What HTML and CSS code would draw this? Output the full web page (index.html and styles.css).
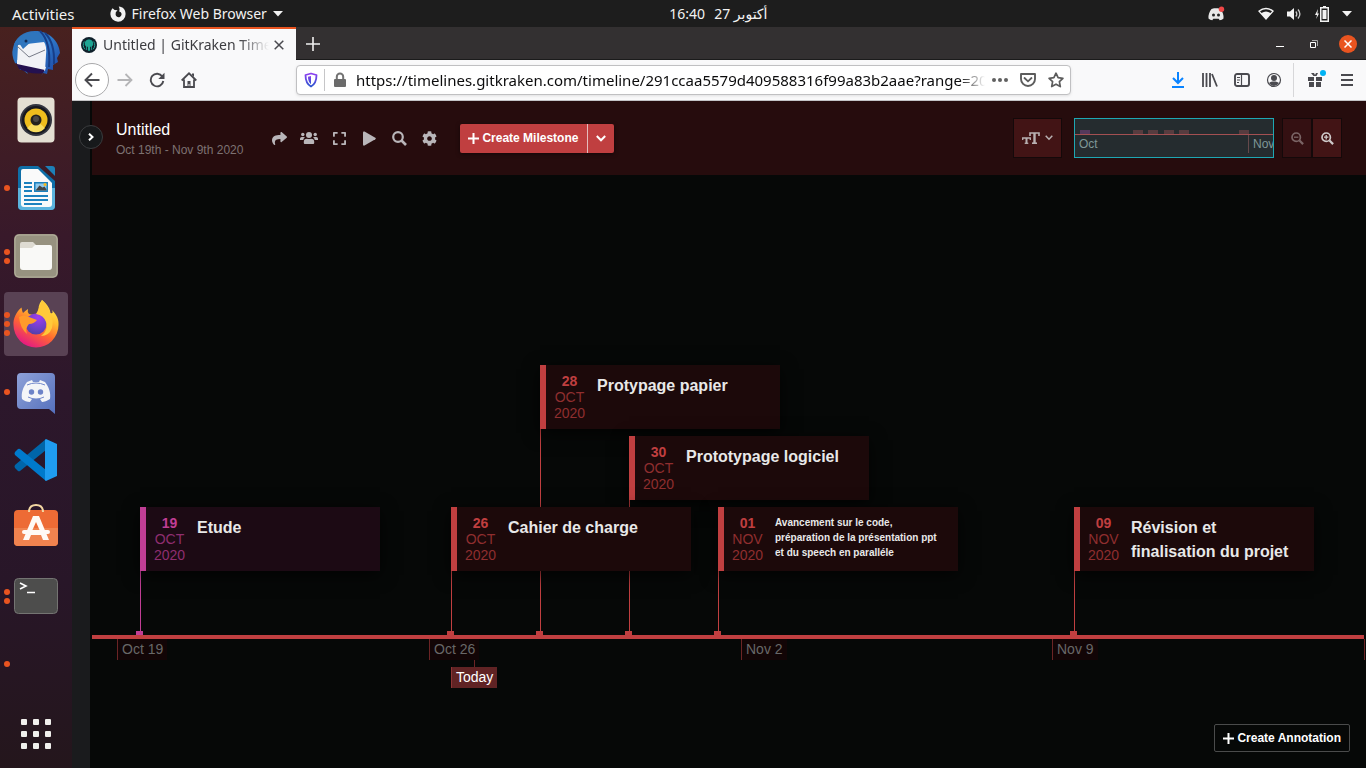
FILE: index.html
```html
<!DOCTYPE html>
<html lang="en">
<head>
<meta charset="utf-8">
<meta name="viewport" content="width=device-width, initial-scale=1">
<title>Untitled | GitKraken Timelines</title>
<link rel="stylesheet" href="styles.css">
</head>
<body>
<header class="topbar">
  <div class="topbar-left">
    <button class="bar-button activities" type="button">Activities</button>
    <button class="bar-button app-menu" type="button">
      <svg width="16" height="16" viewBox="0 0 16 16"><path fill="#f2f2f2" d="M2.600 2.200 4.600 4 7.600 4.200 5.800 6.200 5.600 8.400A3 3 0 1 0 10.800 6.200L9.200 5.600 9.600 3 8.800.6C13 .8 15.600 4 15.600 8A7.600 7.600 0 0 1 .4 8.200C.4 5.800 1.200 4 2.600 2.200Z"/></svg>
      <span>Firefox Web Browser</span>
      <svg width="10" height="6" viewBox="0 0 10 6"><path fill="#f2f2f2" d="M0 0h10L5 5.500Z"/></svg>
    </button>
  </div>
  <button class="bar-button clock" type="button"><span>16:40</span><span>27 أكتوبر</span></button>
  <div class="tray">
    <svg class="tray-discord" width="18" height="16" viewBox="0 0 18 16"><path fill="#e8e8e8" d="M4.500 3 7 2.300h4L13.500 3C15.500 5.500 17 9 16.500 12.500Q15 14 12.700 14.200L11.700 12.800H6.300L5.300 14.200Q3 14 1.500 12.500C1 9 2.500 5.500 4.500 3Z"/><circle cx="6.500" cy="9" r="1.500" fill="#222"/><circle cx="11.500" cy="9" r="1.500" fill="#222"/><circle cx="14.500" cy="3.200" r="2.700" fill="#f04747"/></svg>
    <svg width="16" height="14" viewBox="0 0 16 14"><path fill="#f2f2f2" fill-rule="evenodd" d="M0 4Q8-2.600 16 4L8 13ZM2 4.300 3.500 6Q8 3 12.500 6L14 4.300Q8 .2 2 4.300Z"/></svg>
    <svg width="16" height="14" viewBox="0 0 16 14"><path fill="#f2f2f2" d="M1 4.500h3L8 1v12L4 9.500H1Z"/><path d="M9.800 4.500q2 2.500 0 5M12 2.500q3.800 4.500 0 9" fill="none" stroke="#c8c8c8" stroke-width="1.300"/></svg>
    <svg width="16" height="16" viewBox="0 0 16 16"><path fill="#f2f2f2" fill-rule="evenodd" d="M9 0h3v1h3v15H6V1h3ZM7.500 2.500v12h6v-12ZM8.500 4h4v9h-4Z"/><path fill="#f2f2f2" d="M4 3 1 9h2l-.8 4L5 7.500H3.400Z"/></svg>
    <svg width="10" height="6" viewBox="0 0 10 6"><path fill="#f2f2f2" d="M0 0h10L5 5.500Z"/></svg>
  </div>
</header>

<div class="desktop">
  <nav class="dock" aria-label="Dock">
    <button class="dock-item" type="button" aria-label="Thunderbird">
      <svg width="50" height="50" viewBox="0 0 50 50"><defs><linearGradient id="tb" x1="0" y1="0" x2="1" y2="1"><stop offset="0" stop-color="#2b6db5"/><stop offset=".5" stop-color="#2f79c9"/><stop offset="1" stop-color="#1b3f9e"/></linearGradient></defs><path fill="url(#tb)" d="M2 21C4 11 12 4 24 4 38 4 48 14 49 26L46 31 47 35 42 38 42 43 37 42 36 47 32 46 30 50 34 41 15 43 17 47 12 43 9 43 8 38 4 36Q0 28 2 21Z"/><path fill="#f1f2f6" d="M7 18 33 15Q36 19 35 28L34 44 6 38Z"/><path fill="#2f75bd" d="M3 17Q8 7 20 5 29 4 33 15L22 13 12 22 8 16Z"/><path d="m6 19 12 11 16-7" fill="none" stroke="#777b88"/><path fill="#241150" d="m5 36 29 6-2 4Q21 48 8 42Z"/><path fill="#f1f2f6" d="m6 33 29 7-1 3-28-6Z"/><path d="M34 6Q44 16 43 37M29 4Q40 15 38 40" stroke="#173e88" stroke-width="2" fill="none"/><circle cx="15" cy="14" r="1.500" fill="#112b54"/></svg>
    </button>
    <button class="dock-item" type="button" aria-label="Rhythmbox">
      <svg width="48" height="48" viewBox="0 0 48 48"><rect x="5.500" y="1.500" width="37" height="45" rx="4" fill="#e4dfd3"/><circle cx="24" cy="24" r="16" fill="#33353f"/><circle cx="24" cy="24" r="14" fill="#17181f"/><circle cx="24" cy="24" r="11.500" fill="#eebd1d"/><path d="M24 24 15 32a11.500 11.500 0 0 0 18 0Z" fill="#f8dc5f"/><circle cx="24" cy="24" r="5.500" fill="#24221e"/><circle cx="24" cy="23" r="3" fill="#4b4946"/></svg>
    </button>
    <button class="dock-item" type="button" aria-label="LibreOffice Writer">
      <span class="dots"><i></i></span>
      <svg width="48" height="48" viewBox="0 0 48 48"><path fill="#0f6fa8" d="M10 2h16l17 15v25q0 4-4 4H10q-4 0-4-4V6q0-4 4-4Z"/><path fill="#5bb3dd" d="M6 24h37v18q0 4-4 4H10q-4 0-4-4Z"/><path fill="#fafafa" d="M11 5h15l14 14v21q0 3-3 3H12q-3 0-3-3V7q0-2 2-2Z"/><path fill="#1d80b8" d="M33 2h7q3 0 3 3v7Z"/><path d="M12 19h8m-8 4h8m-8 4h8m-8 5h24m-24 4h24m-24 4h18" stroke="#1c81be" stroke-width="2"/><path fill="#1c81be" d="M22 18h14v10H22Z"/><path fill="#91c9ec" d="M23.500 19.500h11v7h-11Z"/><path fill="#444" d="m23.500 26.500 4-5 3 2 2-1 2 3v1Z"/><circle cx="33" cy="20.500" r="1.500" fill="#f6b91a"/></svg>
    </button>
    <button class="dock-item" type="button" aria-label="Files">
      <span class="dots"><i></i><i></i></span>
      <svg width="48" height="48" viewBox="0 0 48 48"><rect x="2" y="2" width="44" height="44" rx="5" fill="#979280"/><rect x="3" y="3" width="42" height="42" rx="4" fill="none" stroke="#b2ae9b"/><path fill="#dedbd2" d="M8 20v-8q0-2 2-2h11l3 3v7Z"/><path fill="#f9f9f7" d="M8 16h12l3-3h15q2 0 2 2v20q0 3-3 3H11q-3 0-3-3Z"/></svg>
    </button>
    <button class="dock-item active" type="button" aria-label="Firefox">
      <span class="dots"><i></i><i></i><i></i></span>
      <svg width="48" height="48" viewBox="0 0 48 48"><defs><linearGradient id="fx" x1=".85" y1="0" x2=".3" y2="1"><stop offset="0" stop-color="#fff44f"/><stop offset=".35" stop-color="#ffbd2e"/><stop offset=".62" stop-color="#ff6a2f"/><stop offset="1" stop-color="#e31587"/></linearGradient><radialGradient id="fp" cx=".6" cy=".2" r=".9"><stop offset="0" stop-color="#a03df0"/><stop offset=".6" stop-color="#6a41c6"/><stop offset="1" stop-color="#4a3f9f"/></radialGradient></defs><path fill="url(#fx)" d="M30 0C36 5 38 9 38.500 13 41 14 41 12 40 10 45 15 47 20 46.500 25A22.500 22.500 0 0 1 1.500 25C1 19 4 12 9.500 7.500Q10 11 11 13 13 11 16 9 15 12 17 14L22 15 27 13Q25 6 30 0Z"/><circle cx="24" cy="24" r="10.500" fill="url(#fp)"/><path fill="#ff9a2b" d="M7 17Q12 14 17 17L25 20Q22 24 17 24 13 28 15 34 8 28 7 17Z"/><path fill="#ffc93a" d="M24 14Q26 11 30 0 38 8 38 14 42 20 40 28 37 36 29 36 36 31 34.500 23 32 15 24 14Z"/></svg>
    </button>
    <button class="dock-item" type="button" aria-label="Discord">
      <span class="dots"><i></i></span>
      <svg width="48" height="48" viewBox="0 0 48 48"><defs><linearGradient id="dc" x1="0" y1="0" x2="1" y2="1"><stop offset="0" stop-color="#8ea1d8"/><stop offset="1" stop-color="#5570bd"/></linearGradient></defs><path fill="url(#dc)" d="M9 5h30q4 0 4 4v37l-6-5H9q-4 0-4-4V9q0-4 4-4Z"/><path fill="#f4f5f8" d="m15 14 5-2 1 2h6l1-2 5 2c4 5 6 11 5 17-3 2-6 3-8 3l-2-3h-8l-2 3c-3 0-6-1-8-3-1-6 1-12 5-17Z"/><path fill="none" stroke="#7288cc" stroke-width="1" d="M15 17q9-4 18 0M16 29q8 4 16 0"/><circle cx="19.500" cy="24" r="2.700" fill="#6d83c8"/><circle cx="28.500" cy="24" r="2.700" fill="#6d83c8"/></svg>
    </button>
    <button class="dock-item" type="button" aria-label="Visual Studio Code">
      <svg width="48" height="48" viewBox="0 0 48 48"><path fill="#0065a9" d="m3 32 3 3q1 .6 2 0L34 14V3L3 29q-1 1.500 0 3Z"/><path fill="#007acc" d="m3 16 3-3q1-.6 2 0L34 34v11L3 19q-1-1.500 0-3Z"/><path fill="#1f9cf0" d="M34 3 45 8v32l-11 5-1-1V4Z"/></svg>
    </button>
    <button class="dock-item" type="button" aria-label="Ubuntu Software">
      <svg width="48" height="48" viewBox="0 0 48 48"><rect x="2" y="6" width="44" height="36" rx="4" fill="#ed6b35"/><path fill="#f0834f" d="M2 24h44v14q0 4-4 4H6q-4 0-4-4Z"/><path d="M17 8q0-7 7-7t7 7" fill="none" stroke="#f2d7a2" stroke-width="2"/><path fill="#fffaf5" d="M21 12h6l10 24h-6l-2-5H19l-2 5h-6Zm3 6-4 9h8Z"/><rect x="10" y="26" width="28" height="4" rx="2" fill="#fffaf5"/></svg>
    </button>
    <button class="dock-item" type="button" aria-label="Terminal">
      <span class="dots"><i></i><i></i></span>
      <svg width="48" height="48" viewBox="0 0 48 48"><rect x="2.500" y="6.500" width="43" height="35" rx="4" fill="#4d4d4c" stroke="#747472"/><path d="m8 11 6 3-6 3M15 20.500h8" fill="none" stroke="#fff" stroke-width="1.600"/></svg>
    </button>
    <button class="dock-item" type="button" aria-label="Running window"><span class="dots"><i></i></span></button>
    <button class="dock-item show-apps" type="button" aria-label="Show applications">
      <svg width="30" height="30" viewBox="0 0 30 30" fill="#f0efec"><rect width="6" height="6" rx="1"/><rect x="12" width="6" height="6" rx="1"/><rect x="24" width="6" height="6" rx="1"/><rect y="12" width="6" height="6" rx="1"/><rect x="12" y="12" width="6" height="6" rx="1"/><rect x="24" y="12" width="6" height="6" rx="1"/><rect y="24" width="6" height="6" rx="1"/><rect x="12" y="24" width="6" height="6" rx="1"/><rect x="24" y="24" width="6" height="6" rx="1"/></svg>
    </button>
  </nav>

  <div class="browser">
    <div class="tabstrip">
      <div class="tab">
        <svg width="16" height="16" viewBox="0 0 16 16"><circle cx="8" cy="8" r="8" fill="#10202b"/><path fill="#1fa593" d="M8 2.500c3 0 4.200 2.200 4.200 4.500 0 1.200-.7 2-1.400 2.600v3.200l-.9.500V9.800H9v4H7v-4h-.9v3.500l-.9-.5V9.600C4.500 9 3.800 8.200 3.800 7c0-2.300 1.200-4.500 4.200-4.500Z"/><path d="M3.300 4.500C1.600 7 2 10.500 4 12.300M12.700 4.500c1.700 2.500 1.300 6-.7 7.800" fill="none" stroke="#1fa593"/></svg>
        <span class="tab-title">Untitled | GitKraken Timelines</span>
        <button class="tab-close" type="button" aria-label="Close tab"><svg width="10" height="10" viewBox="0 0 10 10"><path d="m.7.700 8.600 8.600m0-8.600L.7 9.300" stroke="#4a4a4f" stroke-width="1.500"/></svg></button>
      </div>
      <button class="new-tab" type="button" aria-label="New tab"><svg width="14" height="14" viewBox="0 0 14 14"><path d="M7 0v14M0 7h14" stroke="#f0f0f0" stroke-width="1.600"/></svg></button>
      <div class="window-controls">
        <button type="button" aria-label="Minimize"><svg width="8" height="10" viewBox="0 0 8 10"><path d="M0 7.500h8" stroke="#fff"/></svg></button>
        <button type="button" aria-label="Restore"><svg width="8" height="8" viewBox="0 0 8 8"><path d="M2 .5h5.500V6" fill="none" stroke="#aaa"/><path d="M.5 2.500h5v5h-5Z" fill="none" stroke="#fff"/></svg></button>
        <button class="window-close" type="button" aria-label="Close"><svg width="8" height="8" viewBox="0 0 8 8"><path d="m.5.500 7 7m0-7-7 7" stroke="#fff" stroke-width="1.500"/></svg></button>
      </div>
    </div>

    <div class="toolbar">
      <button class="nav-back" type="button" aria-label="Back"><svg width="16" height="16" viewBox="0 0 16 16"><path d="M15.500 8H1.500M8 1.500 1.500 8 8 14.500" fill="none" stroke="#4a4a4f" stroke-width="1.900"/></svg></button>
      <button type="button" aria-label="Forward"><svg width="16" height="16" viewBox="0 0 16 16"><path d="M.5 8h14M8.500 2l6 6-6 6" fill="none" stroke="#b5b5b7" stroke-width="1.800"/></svg></button>
      <button type="button" aria-label="Reload"><svg width="16" height="16" viewBox="0 0 16 16"><path d="M13.300 4.500A6.300 6.300 0 1 0 14.300 9" fill="none" stroke="#4a4a4f" stroke-width="1.900"/><path fill="#4a4a4f" d="M15.500.8V7H9.300Z"/></svg></button>
      <button type="button" aria-label="Home"><svg width="16" height="16" viewBox="0 0 16 16"><path d="M.7 8.500 8 1.300l7.300 7.200M3 7.500V15h10V7.500" fill="none" stroke="#4a4a4f" stroke-width="1.800"/><path fill="#4a4a4f" d="M11 1.500h2V5l-2-2ZM6.500 9h3v6h-3Z"/><path stroke="#f9f9fa" d="M8 12v2"/></svg></button>
      <div class="urlbar">
        <button type="button" class="shield" aria-label="Tracking protection"><svg width="14" height="16" viewBox="0 0 14 16"><defs><linearGradient id="sh" x2="0" y2="1"><stop stop-color="#8d3ff0"/><stop offset="1" stop-color="#2b55cf"/></linearGradient></defs><path d="M7 1.500 12.500 3c0 5.500-1 9-5.500 11.500C2.500 12 1.500 8.500 1.500 3Z" fill="none" stroke="url(#sh)" stroke-width="1.800" stroke-linejoin="round"/><path fill="url(#sh)" d="M7 4v8.200C4.800 10.500 4 8 4 4.800Z"/></svg></button>
        <svg class="lock" width="14" height="16" viewBox="0 0 14 16"><path d="M3.800 7V4.800a3.200 3.200 0 0 1 6.400 0V7" fill="none" stroke="#737373" stroke-width="2"/><rect x="1" y="7" width="12" height="8" rx="1" fill="#6b6b6b"/></svg>
        <input class="url" type="text" aria-label="Address" value="https://timelines.gitkraken.com/timeline/291ccaa5579d409588316f99a83b2aae?range=2020">
        <button type="button" aria-label="Page actions"><svg width="16" height="4" viewBox="0 0 16 4" fill="#606060"><circle cx="2" cy="2" r="2"/><circle cx="8" cy="2" r="2"/><circle cx="14" cy="2" r="2"/></svg></button>
        <button type="button" aria-label="Save to Pocket"><svg width="16" height="14" viewBox="0 0 16 14"><path d="M1 1h14v5A7 7 0 0 1 1 6Z" fill="none" stroke="#5c5c5c" stroke-width="1.900" stroke-linejoin="round"/><path d="m4.500 5 3.500 3.300L11.500 5" fill="none" stroke="#5c5c5c" stroke-width="1.800" stroke-linecap="round"/></svg></button>
        <button type="button" aria-label="Bookmark"><svg width="16" height="16" viewBox="0 0 16 16"><path d="m8 1.200 2.100 4.500 4.800.6-3.500 3.400.9 4.900L8 12.200l-4.300 2.400.9-4.900L1.100 6.300l4.800-.6Z" fill="none" stroke="#5c5c5c" stroke-width="1.700" stroke-linejoin="round"/></svg></button>
      </div>
      <button type="button" aria-label="Downloads"><svg width="14" height="16" viewBox="0 0 14 16"><path d="M7 0v11M2 6l5 5 5-5M1 15h12" fill="none" stroke="#0a84ff" stroke-width="2"/></svg></button>
      <button type="button" aria-label="Library"><svg width="16" height="14" viewBox="0 0 16 14"><path d="M1 0v14M4.500 0v14M8 0v14M10 1l5 12.500" stroke="#4a4a4f" stroke-width="1.800"/></svg></button>
      <button type="button" aria-label="Sidebars"><svg width="16" height="14" viewBox="0 0 16 14"><rect x="1" y="1" width="14" height="12" rx="2" fill="none" stroke="#4a4a4f" stroke-width="1.900"/><path d="M7.500 1v12M3 4.500h3M3 7h3M3 9.500h2" stroke="#4a4a4f" stroke-width="1.200"/></svg></button>
      <button type="button" aria-label="Account"><svg width="16" height="16" viewBox="0 0 16 16"><circle cx="8" cy="8" r="6.500" fill="none" stroke="#4a4a4f" stroke-width="1.200"/><circle cx="8" cy="6" r="3" fill="#4a4a4f"/><path fill="#4a4a4f" d="M3 11q2-1.500 3.500-1.500h3Q11 9.500 13 11q-2 3-5 3t-5-3Z"/></svg></button>
      <span class="toolbar-separator"></span>
      <button type="button" aria-label="What's new" class="gift"><svg width="16" height="16" viewBox="0 0 16 16"><path fill="#4a4a4f" d="M1 5h6v4H1Zm8 0h6v4H9Zm-7 5h5v5H2Zm7 0h5v5H9ZM4 1l3 0 1 2 1-2h2L9.500 4h-3Z"/></svg></button>
      <button type="button" aria-label="Menu"><svg width="12" height="12" viewBox="0 0 12 12"><path d="M0 1h12M0 6h12M0 11h12" stroke="#4a4a4f" stroke-width="2"/></svg></button>
    </div>

    <div class="page">
      <aside class="rail">
        <button class="rail-toggle" type="button" aria-label="Expand sidebar"><svg width="6" height="8" viewBox="0 0 6 8"><path d="m1 .700 3.500 3.300L1 7.300" fill="none" stroke="#fff" stroke-width="2"/></svg></button>
      </aside>
      <main class="timeline">
        <header class="timeline-header">
          <div class="heading">
            <h1>Untitled</h1>
            <p>Oct 19th - Nov 9th 2020</p>
          </div>
          <div class="tools">
            <button type="button" aria-label="Share"><svg width="15" height="15" viewBox="0 0 512 512"><path d="M503.691 189.836L327.687 37.851C312.281 24.546 288 35.347 288 56.015v80.053C127.371 137.907 0 170.100 0 322.326c0 61.441 39.581 122.309 83.333 154.132 13.653 9.931 33.111-2.533 28.077-18.631C66.066 312.814 132.917 274.316 288 272.085V360c0 20.700 24.300 31.453 39.687 18.164l176.004-152c11.071-9.562 11.086-26.753 0-36.328z"/></svg></button>
            <button type="button" aria-label="People"><svg width="18" height="14" viewBox="0 0 18 14"><circle cx="2.800" cy="3.500" r="1.700"/><circle cx="15.200" cy="3.500" r="1.700"/><circle cx="9" cy="4" r="3"/><path d="M0 9V7.800Q0 6 1.800 6h1.700q1 0 1.500.6Q3.400 7.400 3.200 9ZM18 9V7.800Q18 6 16.200 6h-1.700q-1 0-1.500.6 1.600.8 1.800 2.400ZM3.800 12v-1.200Q3.800 7.700 7 7.700q2 .7 4 0 3.200 0 3.200 3.100V12q0 1-1 1H4.800q-1 0-1-1Z"/></svg></button>
            <button type="button" aria-label="Fit to screen"><svg width="13" height="15" viewBox="0 0 448 512"><path d="M0 180V56c0-13.300 10.700-24 24-24h124c6.600 0 12 5.400 12 12v40c0 6.600-5.400 12-12 12H64v84c0 6.600-5.400 12-12 12H12c-6.600 0-12-5.400-12-12zM288 44v40c0 6.600 5.400 12 12 12h84v84c0 6.600 5.400 12 12 12h40c6.600 0 12-5.400 12-12V56c0-13.300-10.700-24-24-24H300c-6.600 0-12 5.400-12 12zm148 276h-40c-6.600 0-12 5.400-12 12v84h-84c-6.600 0-12 5.400-12 12v40c0 6.600 5.400 12 12 12h124c13.300 0 24-10.700 24-24V332c0-6.600-5.400-12-12-12zM160 468v-40c0-6.600-5.400-12-12-12H64v-84c0-6.600-5.400-12-12-12H12c-6.600 0-12 5.400-12 12v124c0 13.300 10.700 24 24 24h124c6.600 0 12-5.400 12-12z"/></svg></button>
            <button type="button" aria-label="Present"><svg width="13" height="15" viewBox="0 0 13 15"><path d="M0 1.500Q0 0 1.500.5L12.300 6.800Q13.300 7.500 12.300 8.200L1.500 14.500Q0 15 0 13.500Z"/></svg></button>
            <button type="button" aria-label="Search"><svg width="15" height="15" viewBox="0 0 15 15"><circle cx="6" cy="6" r="4.800" fill="none" stroke="#b9b6b9" stroke-width="2.200"/><path d="m9.500 9.500 4.500 4.500" stroke="#b9b6b9" stroke-width="2.600"/></svg></button>
            <button type="button" aria-label="Settings"><svg width="15" height="15" viewBox="0 0 512 512"><path d="M487.400 315.700l-42.600-24.600c4.300-23.200 4.300-47 0-70.200l42.600-24.600c4.900-2.800 7.100-8.600 5.500-14-11.100-35.600-30-67.800-54.700-94.600-3.800-4.100-10-5.100-14.800-2.300L380.800 110c-17.900-15.400-38.500-27.300-60.800-35.100V25.800c0-5.600-3.900-10.500-9.400-11.700-36.700-8.200-74.300-7.800-109.200 0-5.500 1.200-9.400 6.100-9.400 11.700V75c-22.200 7.900-42.800 19.800-60.800 35.100L88.700 85.500c-4.900-2.800-11-1.900-14.800 2.300-24.700 26.700-43.600 58.900-54.700 94.600-1.700 5.400.6 11.200 5.500 14L67.300 221c-4.300 23.200-4.300 47 0 70.200l-42.600 24.600c-4.900 2.800-7.100 8.600-5.500 14 11.100 35.600 30 67.800 54.700 94.600 3.800 4.100 10 5.100 14.800 2.300l42.600-24.600c17.900 15.400 38.500 27.300 60.800 35.100v49.200c0 5.600 3.900 10.500 9.400 11.700 36.700 8.200 74.300 7.800 109.200 0 5.500-1.200 9.400-6.100 9.400-11.700v-49.200c22.200-7.900 42.800-19.800 60.800-35.100l42.600 24.600c4.900 2.800 11 1.900 14.800-2.300 24.700-26.700 43.600-58.900 54.700-94.600 1.500-5.500-.7-11.300-5.600-14.100zM256 336c-44.100 0-80-35.900-80-80s35.900-80 80-80 80 35.900 80 80-35.900 80-80 80z"/></svg></button>
          </div>
          <div class="create">
            <button class="create-main" type="button"><svg width="11" height="11" viewBox="0 0 11 11"><path d="M5.500 0v11M0 5.500h11" stroke="#fff" stroke-width="2"/></svg>Create Milestone</button>
            <button class="create-more" type="button" aria-label="More create options"><svg width="10" height="7" viewBox="0 0 10 7"><path d="m.8 1 4.200 4.300L9.200 1" fill="none" stroke="#fff" stroke-width="2"/></svg></button>
          </div>
          <div class="view-controls">
            <button class="text-size" type="button" aria-label="Text size"><svg width="18" height="12" viewBox="0 0 18 12"><g fill="none" stroke="#b9b1b2"><path d="M8 4V1h9v3" stroke-width="1.600"/><path d="M12.500 1v10" stroke-width="2.400"/><path d="M10 11.200h5" stroke-width="1.600"/><path d="M.7 8V6h7.600v2" stroke-width="1.300"/><path d="M4.500 6v5" stroke-width="2"/><path d="M2.700 11.300h3.600" stroke-width="1.300"/></g></svg><svg width="8" height="6" viewBox="0 0 8 6"><path d="m.7.800 3.300 3.400L7.300.800" fill="none" stroke="#b9b1b2" stroke-width="1.500"/></svg></button>
            <div class="minimap">
              <div class="minimap-track">
                <i class="pink" style="left:5px"></i><i style="left:58px"></i><i style="left:73px"></i><i style="left:89px"></i><i style="left:104px"></i><i style="left:164px"></i>
              </div>
              <div class="minimap-labels"><span class="minimap-oct">Oct</span><span class="minimap-nov">Nov</span></div>
            </div>
            <div class="zoom">
              <button class="zoom-out" type="button" aria-label="Zoom out"><svg width="13" height="13" viewBox="0 0 13 13"><g fill="none" stroke="#cfcaca"><circle cx="5.200" cy="5.200" r="4.200" stroke-width="1.700"/><path d="m8.500 8.500 3.600 3.600" stroke-width="2.200"/><path d="M3 5.200h4.400" stroke-width="1.300"/></g></svg></button>
              <button type="button" aria-label="Zoom in"><svg width="13" height="13" viewBox="0 0 13 13"><g fill="none" stroke="#cfcaca"><circle cx="5.200" cy="5.200" r="4.200" stroke-width="1.700"/><path d="m8.500 8.500 3.600 3.600" stroke-width="2.200"/><path d="M3 5.200h4.400M5.200 3v4.400" stroke-width="1.300"/></g></svg></button>
            </div>
          </div>
        </header>

        <section class="canvas" aria-label="Timeline">
          <div class="milestones">
            <article class="milestone row-3" style="left:448px"><div class="card"><p class="date"><b>28</b>OCT<br>2020</p><h2>Protypage papier</h2></div></article>
            <article class="milestone row-2" style="left:537px"><div class="card"><p class="date"><b>30</b>OCT<br>2020</p><h2>Prototypage logiciel</h2></div></article>
            <article class="milestone pink" style="left:48px"><div class="card"><p class="date"><b>19</b>OCT<br>2020</p><h2>Etude</h2></div></article>
            <article class="milestone" style="left:359px"><div class="card"><p class="date"><b>26</b>OCT<br>2020</p><h2>Cahier de charge</h2></div></article>
            <article class="milestone" style="left:626px"><div class="card"><p class="date"><b>01</b>NOV<br>2020</p><h2 class="long">Avancement sur le code, préparation de la présentation ppt et du speech en paralléle</h2></div></article>
            <article class="milestone" style="left:982px"><div class="card"><p class="date"><b>09</b>NOV<br>2020</p><h2>Révision et finalisation du projet</h2></div></article>
          </div>
          <div class="axis"></div>
          <div class="scale">
            <span class="today-line" style="left:382px"></span>
            <span class="tick" style="left:25px">Oct 19</span>
            <span class="tick" style="left:337px">Oct 26</span>
            <span class="tick" style="left:649px">Nov 2</span>
            <span class="tick" style="left:960px">Nov 9</span>
            <span class="tick bare" style="left:1272px"></span>
            <span class="today" style="left:359px">Today</span>
            <button class="annotate" type="button"><svg width="11" height="11" viewBox="0 0 11 11"><path d="M5.500 0v11M0 5.500h11" stroke="#fff" stroke-width="2"/></svg>Create Annotation</button>
          </div>
        </section>
      </main>
    </div>
  </div>
</div>
</body>
</html>
```
FILE: styles.css
```css
* {
  box-sizing: border-box;
}

body {
  display: flex;
  flex-direction: column;
  min-height: 100vh;
  margin: 0;
  background: #060807;
  color: #fff;
  font-family: "Liberation Sans", Arial, sans-serif;
  font-size: 14px;
}

button {
  display: flex;
  align-items: center;
  justify-content: center;
  flex: none;
  margin: 0;
  padding: 0;
  border: 0;
  background: none;
  color: inherit;
  font: inherit;
}

svg {
  display: block;
  flex: none;
}

h1,
h2,
p {
  margin: 0;
}

/* System bar */

.topbar {
  display: flex;
  align-items: center;
  height: 27px;
  background: #1d1d1d;
  color: #f2f2f2;
  font-family: "Noto Sans", "DejaVu Sans", sans-serif;
}

.topbar-left {
  display: flex;
  align-items: center;
  flex: 0 0 49%;
  gap: 35px;
  padding-left: 12px;
}

.activities {
  font-size: 15px;
}

.app-menu {
  gap: 6px;
}

.clock {
  gap: 9px;
}

.tray {
  display: flex;
  align-items: center;
  gap: 12px;
  margin-left: auto;
  padding-right: 14px;
}

.tray-discord {
  margin-right: 21px;
}

.desktop {
  display: flex;
  flex: 1;
}

/* Dock */

.dock {
  display: flex;
  flex: none;
  flex-direction: column;
  gap: 4px;
  width: 72px;
  padding: 0 4px 2px;
  overflow: hidden;
  background: linear-gradient(#48211f, #38192a 28%, #2c172b 50%, #281628 75%, #24161c);
}

.dock-item {
  position: relative;
  width: 64px;
  height: 64px;
  border-radius: 4px;
}

.dock-item:first-child {
  margin-top: -7px;
}

.dock-item.active {
  background: #594254;
}

.dots {
  position: absolute;
  left: 0;
  display: flex;
  flex-direction: column;
  gap: 3px;
}

.dots i {
  width: 6px;
  height: 6px;
  border-radius: 50%;
  background: #e95420;
}

.show-apps {
  margin-top: auto;
}

/* Browser chrome */

.browser {
  display: flex;
  flex: 1;
  flex-direction: column;
  min-width: 0;
  font-family: "Noto Sans", sans-serif;
}

.tabstrip {
  display: flex;
  height: 33px;
  background: #333031;
  box-shadow: inset 0 -1px #1b1b1b;
}

.tab {
  display: flex;
  align-items: center;
  width: 224px;
  padding: 0 12px 0 9px;
  border-top: 2px solid #e95420;
  background: #f9f9fa;
  color: #3c3c40;
}

.tab-title {
  flex: 1;
  margin: 0 5px 0 6px;
  overflow: hidden;
  white-space: nowrap;
  mask-image: linear-gradient(to right, #000 82%, transparent);
}

.new-tab {
  width: 34px;
}

.window-controls {
  display: flex;
  align-items: center;
  gap: 16px;
  margin-left: auto;
  padding-right: 9px;
}

.window-controls button {
  width: 18px;
  height: 18px;
}

.window-controls .window-close {
  border-radius: 50%;
  background: #e95420;
}

.toolbar {
  display: flex;
  align-items: center;
  height: 41px;
  padding: 0 3px 0 4px;
  border-bottom: 1px solid #c4c4c6;
  background: #f9f9fa;
}

.toolbar > button {
  width: 32px;
  height: 32px;
}

.toolbar > .nav-back {
  width: 34px;
  height: 34px;
  margin-left: -1px;
  border: 1px solid #a9a9ab;
  border-radius: 50%;
  background: #fff;
}

.urlbar {
  display: flex;
  align-items: center;
  flex: 1;
  min-width: 0;
  height: 30px;
  margin: 0 91px;
  border: 1px solid #c0c0c2;
  border-radius: 4px;
  background: #fff;
  box-shadow: 0 1px 3px #0000001a;
}

.urlbar button {
  width: 28px;
  height: 28px;
}

.urlbar .shield {
  height: 22px;
  border-right: 1px solid #c6c6c8;
}

.lock {
  margin: 0 7px 0 8px;
}

.url {
  flex: 1;
  min-width: 0;
  margin-right: 1px;
  padding: 0 0 0 2px;
  border: 0;
  outline: 0;
  background: none;
  color: #0c0c0d;
  font: 15px "Noto Sans", sans-serif;
  mask-image: linear-gradient(to right, #000 96%, transparent);
}

.toolbar-separator {
  width: 1px;
  height: 34px;
  margin: 0 5px 0 3px;
  background: #d7d7d9;
}

.gift {
  position: relative;
}

.gift::after {
  content: "";
  position: absolute;
  top: 6px;
  right: 5px;
  width: 6px;
  height: 6px;
  border-radius: 50%;
  background: #00b3f4;
}

/* Page */

.page {
  display: flex;
  flex: 1;
  background: #060807;
  font-family: "Liberation Sans", Arial, sans-serif;
}

.rail {
  position: relative;
  width: 18px;
  margin-right: 2px;
  background: #1a1b1d;
}

.rail-toggle {
  position: absolute;
  z-index: 1;
  top: 24px;
  left: 7px;
  width: 24px;
  height: 24px;
  border: 1px solid #3a3c3e;
  border-radius: 50%;
  background: #17191b;
}

.timeline {
  display: flex;
  flex: 1;
  flex-direction: column;
  min-width: 0;
}

.timeline-header {
  display: flex;
  align-items: center;
  height: 74px;
  padding: 0 24px;
  background: #260c0d;
}

.heading {
  padding-top: 3px;
}

.heading h1 {
  font-size: 16px;
  font-weight: 400;
  line-height: 20px;
}

.heading p {
  color: #7d7272;
  font-size: 12px;
  line-height: 20px;
}

.tools {
  display: flex;
  margin: 0 16px 0 21px;
  fill: #b9b6b9;
}

.tools button {
  width: 30px;
  height: 30px;
}

.create {
  display: flex;
  height: 29px;
  border-radius: 2px;
  background: #c03f40;
  box-shadow: 0 1px 4px #00000080;
  font-size: 12px;
  font-weight: 700;
}

.create-main {
  gap: 3px;
  padding: 0 9px 0 8px;
}

.create-more {
  width: 27px;
  border-left: 1px solid #e5bcbc;
}

.view-controls {
  display: flex;
  align-items: center;
  margin-left: auto;
}

.text-size,
.zoom button {
  height: 40px;
  border: 1px solid #14090a;
  background: #421415;
}

.text-size {
  gap: 5px;
  width: 49px;
  margin-right: 12px;
}

.minimap {
  width: 200px;
  height: 40px;
  overflow: hidden;
  border: 1px solid #1ea7b3;
  background: #252c2f;
  color: #7f9797;
  font-size: 12px;
}

.minimap-track {
  position: relative;
  height: 16px;
  border-bottom: 1px solid #a35052;
}

.minimap-track i {
  position: absolute;
  bottom: 0;
  width: 10px;
  height: 4px;
  background: #573c3f;
}

.minimap-track .pink {
  background: #55395c;
}

.minimap-labels {
  display: flex;
  justify-content: space-between;
  line-height: 18px;
}

.minimap-oct {
  padding-left: 4px;
}

.minimap-nov {
  width: 25px;
  padding-left: 4px;
  border-left: 1px solid #65494b;
}

.zoom {
  display: flex;
  margin-left: 8px;
}

.zoom button {
  width: 30px;
}

.zoom .zoom-out {
  background: #341012;
}

.zoom-out svg {
  opacity: 0.45;
}

/* Timeline canvas */

.canvas {
  display: flex;
  flex: 1;
  flex-direction: column;
  overflow: hidden;
}

.milestones {
  position: relative;
  flex: 1;
  min-height: 300px;
}

.milestone {
  --accent: #c03f40;
  --accent-dim: #8f2e2f;
  --fill: #1c090a;
  position: absolute;
  bottom: 0;
  padding-bottom: 64px;
  border-left: 1px solid var(--accent);
}

.milestone.row-2 {
  padding-bottom: 135px;
}

.milestone.row-3 {
  padding-bottom: 206px;
}

.milestone.pink {
  --accent: #c03e95;
  --accent-dim: #8f2e70;
  --fill: #1c0a14;
}

.milestone::after {
  content: "";
  position: absolute;
  bottom: 0;
  left: -5px;
  width: 7px;
  height: 4px;
  background: var(--accent);
}

.card {
  display: flex;
  width: 240px;
  height: 64px;
  margin-left: -1px;
  padding: 8px 15px 0 0;
  border-left: 6px solid var(--accent);
  background: var(--fill);
  box-shadow: 0 4px 16px #000000b3;
}

.date {
  flex: none;
  width: 47px;
  margin-right: 4px;
  padding-top: 1px;
  color: var(--accent-dim);
  line-height: 16px;
  text-align: center;
}

.date b {
  display: block;
  color: var(--accent);
  line-height: 15px;
}

.card h2 {
  padding-top: 1px;
  color: #e8e8e8;
  font-size: 16px;
  line-height: 24px;
}

.card .long {
  padding-top: 0;
  font-size: 10px;
  line-height: 15px;
}

.axis {
  height: 4px;
  margin-right: 2px;
  background: #c03f40;
}

.scale {
  position: relative;
  display: flex;
  align-items: flex-end;
  justify-content: flex-end;
  height: 129px;
  padding: 16px;
}

.tick,
.today {
  position: absolute;
  top: 0;
  height: 21px;
  padding: 0 4px;
  border-left: 1px solid #6b2425;
  background: #120506;
  color: #686868;
  line-height: 21px;
}

.tick.bare {
  padding: 0;
}

.today-line {
  position: absolute;
  top: 0;
  width: 1px;
  height: 28px;
  background: #6b2425;
}

.today {
  top: 28px;
  border-color: #8d3334;
  background: #602324;
  color: #fff;
}

.annotate {
  gap: 3px;
  height: 28px;
  padding: 0 8px;
  border: 1px solid #4a4b4b;
  border-radius: 2px;
  font-size: 12px;
  font-weight: 700;
}
```
